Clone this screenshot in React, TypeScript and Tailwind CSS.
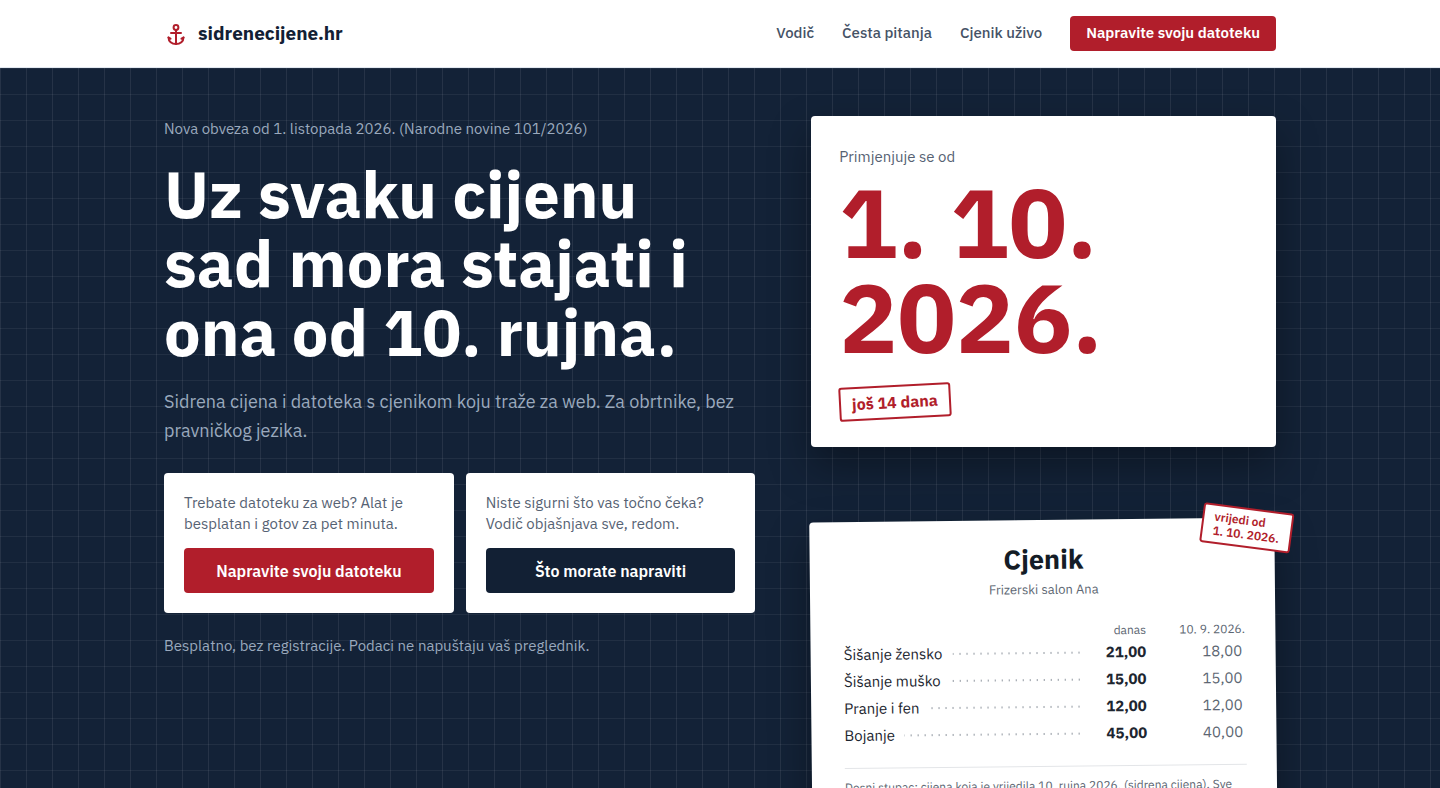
const navLinks = [
  { label: 'Vodič', href: '#vodic' },
  { label: 'Česta pitanja', href: '#pitanja' },
  { label: 'Cjenik uživo', href: '#cjenik' },
];

const choices = [
  {
    text: 'Trebate datoteku za web? Alat je besplatan i gotov za pet minuta.',
    action: 'Napravite svoju datoteku',
    href: '#alat',
    color: 'bg-[#b11e2b]',
  },
  {
    text: 'Niste sigurni što vas točno čeka? Vodič objašnjava sve, redom.',
    action: 'Što morate napraviti',
    href: '#vodic',
    color: 'bg-[#122034]',
  },
];

const services = [
  { name: 'Šišanje žensko', today: '21,00', anchor: '18,00' },
  { name: 'Šišanje muško', today: '15,00', anchor: '15,00' },
  { name: 'Pranje i fen', today: '12,00', anchor: '12,00' },
  { name: 'Bojanje', today: '45,00', anchor: '40,00' },
];

function AnchorIcon() {
  return (
    <svg
      viewBox="0 0 24 24"
      className="size-6 text-[#b11e2b]"
      fill="none"
      stroke="currentColor"
      strokeWidth="2"
      strokeLinecap="round"
      strokeLinejoin="round"
      aria-hidden="true"
    >
      <circle cx="12" cy="5.5" r="2.4" />
      <path d="M12 8v14M7 11h10" />
      <path d="M4.500 15.500c0 3.800 3.200 6.500 7.500 6.500s7.500-2.700 7.500-6.500" />
      <path d="M4.500 15.500l2 1.200M19.500 15.500l-2 1.200" />
    </svg>
  );
}

function Header() {
  return (
    <header className="border-b border-slate-200 bg-white">
      <div className="mx-auto flex h-[67px] max-w-[1160px] items-center justify-between px-6">
        <a href="#" className="flex items-center gap-2.5 text-[19px] font-bold text-[#122034]">
          <AnchorIcon />
          sidrenecijene.hr
        </a>
        <nav className="flex items-center gap-7 text-[15px] font-medium text-[#455266]">
          {navLinks.map((link) => (
            <a key={link.label} href={link.href}>
              {link.label}
            </a>
          ))}
          <a
            href="#alat"
            className="flex h-[35px] items-center rounded-[4px] bg-[#b11e2b] px-4 font-semibold text-white"
          >
            Napravite svoju datoteku
          </a>
        </nav>
      </div>
    </header>
  );
}

function Intro() {
  return (
    <div>
      <p className="text-[15px] leading-[26px] text-[#9aa9bd]">
        Nova obveza od 1. listopada 2026. (Narodne novine 101/2026)
      </p>
      <h1 className="mt-[17px] text-[65px] leading-[69px] font-bold text-white">
        Uz svaku cijenu sad mora stajati i ona od 10. rujna.
      </h1>
      <p className="mt-[21px] text-lg leading-[29px] text-[#9aa9bd]">
        Sidrena cijena i datoteka s cjenikom koju traže za web. Za obrtnike, bez pravničkog jezika.
      </p>
      <div className="mt-7 grid grid-cols-2 gap-3">
        {choices.map((choice) => (
          <div
            key={choice.action}
            className="flex flex-col justify-between gap-3.5 rounded-[4px] bg-white px-5 pt-[19px] pb-5"
          >
            <p className="text-[15px] leading-[21px] text-[#566273]">{choice.text}</p>
            <a
              href={choice.href}
              className={`flex h-[45px] items-center justify-center rounded-[4px] font-semibold text-white ${choice.color}`}
            >
              {choice.action}
            </a>
          </div>
        ))}
      </div>
      <p className="mt-5 text-[15px] leading-[26px] text-[#9aa9bd]">
        Besplatno, bez registracije. Podaci ne napuštaju vaš preglednik.
      </p>
    </div>
  );
}

function Deadline() {
  return (
    <div className="rounded-[4px] bg-white p-7 shadow-[0_18px_40px_rgba(0,0,0,0.35)]">
      <p className="text-[15px] leading-[26px] text-[#566273]">Primjenjuje se od</p>
      <p className="mt-[5px] text-[97px] leading-[95px] font-bold text-[#b11e2b]">
        1. 10.
        <br />
        2026.
      </p>
      <p className="mt-5 w-fit -rotate-3 rounded-[3px] border-2 border-[#b11e2b] px-[11px] py-1 leading-[22px] font-bold text-[#b11e2b]">
        još 14 dana
      </p>
    </div>
  );
}

function PriceList() {
  return (
    <div className="relative rotate-[-0.6deg] rounded-[4px] bg-white pt-6 pr-[30px] pb-16 pl-[33px] shadow-[0_18px_40px_rgba(0,0,0,0.35)]">
      <p className="absolute -top-2.5 -right-[18px] rotate-[8deg] rounded-[3px] border-2 border-[#b11e2b] bg-white px-2.5 py-1 text-xs leading-[14px] font-semibold text-[#b11e2b]">
        vrijedi od
        <br />
        1. 10. 2026.
      </p>
      <h2 className="text-center text-[27px] leading-[30px] font-bold text-[#141c26]">Cjenik</h2>
      <p className="mt-1.5 text-center text-[13px] leading-5 text-[#5c6672]">Frizerski salon Ana</p>
      <table className="mt-[23px] w-full text-[15px] leading-[27px] text-[#1d2630]">
        <thead>
          <tr className="text-xs leading-4 text-[#5c6672]">
            <td />
            <th scope="col" className="w-16 text-right font-normal">
              danas
            </th>
            <th scope="col" className="w-[99px] text-right font-normal">
              10. 9. 2026.
            </th>
          </tr>
        </thead>
        <tbody>
          {services.map((service) => (
            <tr key={service.name}>
              <th scope="row" className="text-left font-normal">
                <span className="flex items-center gap-2.5">
                  {service.name}
                  <span className="h-1 flex-1 bg-[radial-gradient(circle,#8f969f_1px,transparent_1px)] bg-[length:7px_4px] bg-right bg-repeat-x" />
                </span>
              </th>
              <td className="text-right font-bold">{service.today}</td>
              <td className="pr-[3px] text-right text-[#5c6672]">{service.anchor}</td>
            </tr>
          ))}
        </tbody>
      </table>
      <p className="mt-[19px] border-t border-[#e3e5e8] pt-2.5 text-xs leading-[18px] text-[#5c6672]">
        Desni stupac: cijena koja je vrijedila 10. rujna 2026. (sidrena cijena). Sve
      </p>
    </div>
  );
}

export default function App() {
  return (
    <div className="min-h-screen font-['IBM_Plex_Sans','Noto_Sans',sans-serif]">
      <Header />
      <main className="overflow-hidden bg-[#132237] bg-[linear-gradient(to_right,rgba(255,255,255,0.08)_1px,transparent_1px),linear-gradient(to_bottom,rgba(255,255,255,0.06)_1px,transparent_1px)] bg-[length:26px_26px]">
        <div className="mx-auto grid max-w-[1160px] grid-cols-[14fr_11fr] items-start gap-14 px-6 py-12">
          <Intro />
          <div className="flex flex-col gap-[73px]">
            <Deadline />
            <PriceList />
          </div>
        </div>
      </main>
    </div>
  );
}
